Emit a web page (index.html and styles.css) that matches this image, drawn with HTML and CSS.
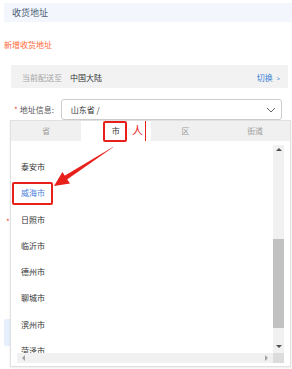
FILE: index.html
```html
<!DOCTYPE html>
<html lang="zh-CN">
<head>
    <meta charset="UTF-8">
    <title>收货地址</title>
    <link rel="stylesheet" href="styles.css">
</head>
<body>
    <div class="page">
        <!-- 标题 -->
        <div class="section-title">收货地址</div>
        <div class="add-link">新增收货地址</div>

        <!-- 配送地区 -->
        <div class="ship-bar">
            <span class="ship-label">当前配送至</span>
            <span class="ship-value">中国大陆</span>
            <span class="ship-switch">切换 <small>&gt;</small></span>
        </div>

        <!-- 表单 -->
        <div class="form">
            <div class="form-row">
                <span class="req">*</span>
                <span class="form-label">地址信息:</span>
                <div class="select-box">
                    <span>山东省 /</span>
                    <svg class="chevron" width="10" height="6" viewBox="0 0 10 6"><path d="M1 1 L5 5 L9 1" fill="none" stroke="#666" stroke-width="1"/></svg>
                </div>
            </div>
            <div class="form-row under-row"><span class="req">*</span></div>
            <div class="under-btn"></div>

            <!-- 地区选择下拉 -->
            <div class="dropdown">
                <div class="tabs">
                    <div class="tab">省</div>
                    <div class="tab active">市</div>
                    <div class="tab">区</div>
                    <div class="tab">街道</div>
                </div>
                <div class="scroll-area">
                    <div class="scroll-main">
                        <ul class="city-list">
                            <li>泰安市</li>
                            <li class="selected">威海市</li>
                            <li>日照市</li>
                            <li>临沂市</li>
                            <li>德州市</li>
                            <li>聊城市</li>
                            <li>滨州市</li>
                            <li>菏泽市</li>
                        </ul>
                        <div class="vbar">
                            <span class="arr up"></span>
                            <span class="vthumb"></span>
                            <span class="arr down"></span>
                        </div>
                    </div>
                    <div class="hbar-row">
                        <div class="hbar">
                            <span class="arr left"></span>
                            <span class="arr right"></span>
                        </div>
                        <div class="corner"></div>
                    </div>
                </div>
            </div>
        </div>

        <!-- 标注 -->
        <div class="mark mark-tab"></div>
        <div class="mark-text">人</div>
        <div class="mark-line"></div>
        <div class="mark mark-item"></div>
        <svg class="mark-arrow" width="292" height="369" viewBox="0 0 292 369">
            <polygon points="113.8,146.4 112.4,147.8 65.6,180.6 64.2,175.9" fill="#e8201c"/>
            <polygon points="54,186 70,183.5 62.4,172" fill="#e8201c"/>
        </svg>
    </div>
</body>
</html>
```

FILE: styles.css
```css
/* 基本设置 */
body {
    margin: 0;
    background: #fff;
    font-family: "Noto Sans CJK SC", "Noto Sans", sans-serif;
    font-size: 8px;
    color: #333;
}

.page {
    position: relative;
    width: 292px;
    height: 369px;
    overflow: hidden;
}

.section-title {
    margin: 3px 0 0 4px;
    height: 19px;
    line-height: 19px;
    padding-left: 8px;
    background: #f3f7fd;
    color: #4a5b72;
    font-size: 9px;
}

.add-link {
    margin: 18px 0 0 4px;
    height: 10px;
    line-height: 10px;
    color: #ff6a3a;
}

/* 配送地区 */
.ship-bar {
    display: flex;
    align-items: center;
    margin: 15px 4px 0 11px;
    height: 23px;
    padding: 2px 8px 0 11px;
    box-sizing: border-box;
    background: #f2f2f2;
}

.ship-label {
    color: #a5a5a5;
}

.ship-value {
    margin-left: 8px;
    color: #333;
}

.ship-switch {
    margin-left: auto;
    color: #3b7fd6;
}

.ship-switch small {
    font-size: 6px;
    margin-left: 2px;
}

/* 表单 */
.form {
    position: relative;
    margin-top: 11px;
}

.form-row {
    display: flex;
    align-items: center;
    height: 21px;
    padding-left: 14px;
}

.req {
    color: #f04a3a;
    margin-right: 2px;
    font-size: 8px;
}

.form-label {
    width: 41px;
    color: #555;
}

.select-box {
    display: flex;
    align-items: center;
    justify-content: space-between;
    width: 221px;
    height: 21px;
    box-sizing: border-box;
    padding: 0 5px 0 9px;
    border: 1px solid #ccc;
    border-radius: 3px;
    color: #333;
}

.under-row {
    margin-top: 96px;
    padding-left: 6px;
    height: 10px;
}

.under-btn {
    margin: 93px 0 0 4px;
    width: 80px;
    height: 27px;
    background: #e6f0fc;
    border-radius: 2px;
}

/* 下拉面板 */
.dropdown {
    position: absolute;
    top: 21px;
    left: 10px;
    width: 281px;
    height: 247px;
    box-sizing: border-box;
    border: 1px solid #e0e0e0;
    background: #fff;
    box-shadow: 0 1px 2px rgba(0, 0, 0, 0.08);
}

.tabs {
    display: flex;
    height: 20px;
    background: #f0f0f0;
}

.tab {
    flex: 1;
    line-height: 20px;
    text-align: center;
    color: #a0a0a0;
}

.tab.active {
    background: #fff;
    color: #333;
}

.scroll-area {
    margin: 4px 6px 0 6px;
}

.scroll-main {
    display: flex;
    height: 208px;
}

.city-list {
    flex: 1;
    margin: 0;
    padding: 9px 0 0 4px;
    list-style: none;
    overflow: hidden;
}

.city-list li {
    height: 26.3px;
    line-height: 26.3px;
    color: #333;
}

.city-list li.selected {
    color: #4a7fe0;
}

/* 滚动条 */
.vbar {
    display: flex;
    flex-direction: column;
    align-items: center;
    width: 11px;
    background: #f1f1f1;
}

.vthumb {
    width: 11px;
    height: 89px;
    margin-top: 88px;
    background: #c1c1c1;
}

.arr {
    width: 0;
    height: 0;
    border: 3px solid transparent;
}

.arr.up {
    margin-top: 3px;
    border-bottom-color: #505050;
    border-top-width: 0;
}

.arr.down {
    margin-top: auto;
    margin-bottom: 5px;
    border-top-color: #505050;
    border-bottom-width: 0;
}

.hbar-row {
    display: flex;
    height: 10px;
}

.hbar {
    flex: 1;
    display: flex;
    align-items: center;
    justify-content: space-between;
    padding: 0 5px;
    background: #f1f1f1;
}

.arr.left {
    border-right-color: #a3a3a3;
    border-left-width: 0;
}

.arr.right {
    border-left-color: #a3a3a3;
    border-right-width: 0;
}

.corner {
    width: 11px;
    background: #dcdcdc;
}

/* 红色标注 */
.mark {
    position: absolute;
    box-sizing: border-box;
    border: 2px solid #e8201c;
    border-radius: 2px;
}

.mark-tab {
    left: 103px;
    top: 121px;
    width: 24px;
    height: 21px;
}

.mark-item {
    left: 12px;
    top: 182px;
    width: 41px;
    height: 23px;
}

.mark-text {
    position: absolute;
    left: 132px;
    top: 120px;
    font-size: 11px;
    line-height: 20px;
    color: #e8201c;
}

.mark-line {
    position: absolute;
    left: 145px;
    top: 121px;
    width: 1px;
    height: 20px;
    background: #e8201c;
}

.mark-arrow {
    position: absolute;
    left: 0;
    top: 0;
    pointer-events: none;
}
```
